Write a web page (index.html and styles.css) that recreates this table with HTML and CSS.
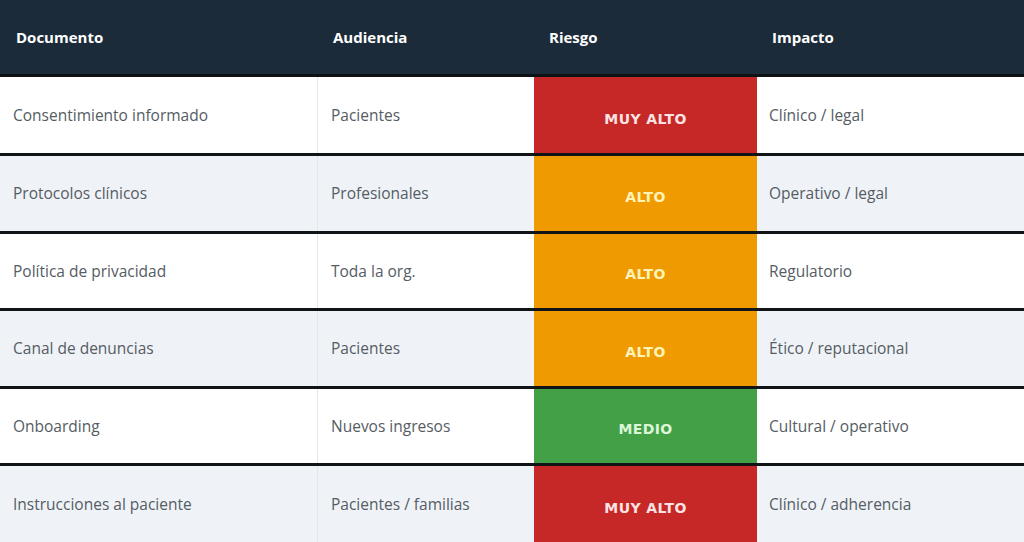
FILE: index.html
```html
<!DOCTYPE html>
<html lang="es">
<head>
<meta charset="utf-8">
<title>Riesgo documental</title>
<link rel="stylesheet" href="styles.css">
</head>
<body>
<div class="table">
  <div class="row head">
    <div class="cell c1">Documento</div>
    <div class="cell c2">Audiencia</div>
    <div class="cell c3">Riesgo</div>
    <div class="cell c4">Impacto</div>
  </div>
  <div class="row odd edge">
    <div class="cell c1">Consentimiento informado</div>
    <div class="cell c2">Pacientes</div>
    <div class="cell c3 risk r-muy">MUY ALTO</div>
    <div class="cell c4">Clínico / legal</div>
  </div>
  <div class="row even">
    <div class="cell c1">Protocolos clínicos</div>
    <div class="cell c2">Profesionales</div>
    <div class="cell c3 risk r-alto">ALTO</div>
    <div class="cell c4">Operativo / legal</div>
  </div>
  <div class="row odd">
    <div class="cell c1">Política de privacidad</div>
    <div class="cell c2">Toda la org.</div>
    <div class="cell c3 risk r-alto">ALTO</div>
    <div class="cell c4">Regulatorio</div>
  </div>
  <div class="row even">
    <div class="cell c1">Canal de denuncias</div>
    <div class="cell c2">Pacientes</div>
    <div class="cell c3 risk r-alto">ALTO</div>
    <div class="cell c4">Ético / reputacional</div>
  </div>
  <div class="row odd">
    <div class="cell c1">Onboarding</div>
    <div class="cell c2">Nuevos ingresos</div>
    <div class="cell c3 risk r-medio">MEDIO</div>
    <div class="cell c4">Cultural / operativo</div>
  </div>
  <div class="row even edge">
    <div class="cell c1">Instrucciones al paciente</div>
    <div class="cell c2">Pacientes / familias</div>
    <div class="cell c3 risk r-muy">MUY ALTO</div>
    <div class="cell c4">Clínico / adherencia</div>
  </div>
</div>
</body>
</html>
```

FILE: styles.css
```css
html, body {
  margin: 0;
  padding: 0;
}
body {
  width: 1024px;
  height: 542px;
  overflow: hidden;
  background: #ffffff;
  font-family: "Open Sans", "Liberation Sans", sans-serif;
}
.table {
  display: flex;
  flex-direction: column;
}
.row {
  display: grid;
  grid-template-columns: 318px 216px 223px 267px;
  height: 74.5px;
  border-top: 3px solid #111417;
}
.row.edge {
  height: 76px;
}
.row.head {
  height: 74px;
  border-top: none;
  border-bottom: 3px solid #0d1216;
  background: #1c2b3a;
}
.row.head + .row {
  border-top: none;
}
.odd {
  background: #ffffff;
}
.even {
  background: #eff3f7;
}
.cell {
  display: flex;
  align-items: center;
  padding-left: 13px;
  font-size: 15.5px;
  color: #555c64;
}
.row .c1 {
  border-right: 1px solid #e4e7ea;
}
.c4 {
  padding-left: 12px;
}
.head .cell {
  color: #ffffff;
  font-weight: 700;
  font-size: 15px;
  padding-left: 15px;
}
.head .c1 {
  border-right: none;
  padding-left: 16px;
}
.risk {
  justify-content: center;
  padding-left: 0;
  padding-top: 7px;
  font-family: "DejaVu Sans", sans-serif;
  font-weight: 700;
  font-size: 14px;
  letter-spacing: 0.4px;
}
.r-muy {
  background: #c62828;
  color: #fbe3e3;
}
.r-alto {
  background: #ef9a00;
  color: #fff3b8;
}
.r-medio {
  background: #43a047;
  color: #dcf6d8;
}
```
